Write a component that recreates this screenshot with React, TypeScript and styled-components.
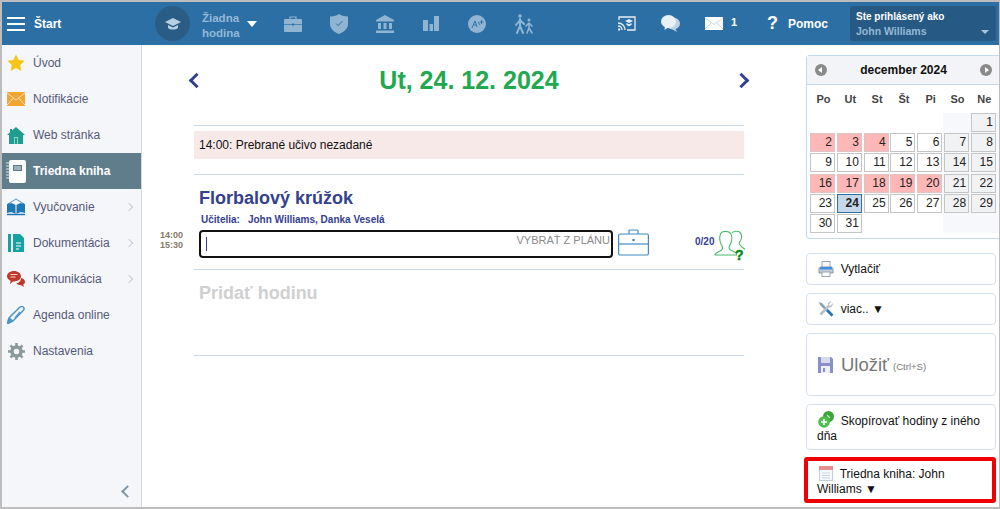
import styled, { createGlobalStyle } from 'styled-components'
import { ReactNode } from 'react'

const GlobalStyle = createGlobalStyle`
  html, body {
    margin: 0;
    height: 100%;
    background: #fff;
  }
  body {
    font-family: "Liberation Sans", Arial, sans-serif;
    overflow: hidden;
  }
  * {
    box-sizing: border-box;
  }
`

const Star = () => (
  <svg width="18" height="18" viewBox="0 0 18 18">
    <path d="M9 .5l2.6 5.6 6.1.7-4.5 4.2 1.2 6.1L9 14l-5.4 3.1 1.2-6.1L.3 6.8l6.1-.7z" fill="#f5c518" />
  </svg>
)

const Envelope = () => (
  <svg width="18" height="14" viewBox="0 0 18 14">
    <rect width="18" height="14" fill="#f2a533" />
    <path d="M0 1l9 7 9-7M0 13l6.5-7M18 13l-6.5-7" stroke="#fbe3bd" strokeWidth="1" fill="none" />
  </svg>
)

const House = () => (
  <svg width="18" height="17" viewBox="0 0 18 17">
    <path d="M9 0l9 8h-2v9H2V8H0l3-2.7V2h2v1.500z" fill="#1f9e8f" />
    <rect x="7" y="10" width="4" height="7" fill="#8fd3ca" />
    <rect x="8" y="11" width="2" height="6" fill="#1f9e8f" />
  </svg>
)

const Notebook = () => (
  <svg width="20" height="23" viewBox="0 0 20 23">
    <rect x="3" y="0" width="17" height="23" rx="2" fill="#fff" />
    <rect x="7" y="5" width="9" height="6" fill="#5f7b8a" />
    <path d="M8 7h7M8 9h7" stroke="#fff" strokeWidth=".8" />
    <path d="M0 3h5M0 6h5M0 9h5M0 12h5M0 15h5M0 18h5" stroke="#dfe6ea" strokeWidth="1.2" />
  </svg>
)

const Book = () => (
  <svg width="18" height="18" viewBox="0 0 18 18">
    <path d="M1 6l8-5 8 5" stroke="#4f94c9" strokeWidth="1" fill="none" />
    <path d="M0 6c3-1 6-1 8.500 1v9C6 14 3 14 0 15zM18 6c-3-1-6-1-8.500 1v9c2.500-2 5.500-2 8.500-1z" fill="#1f77b4" />
    <path d="M0 16.500h18" stroke="#1f77b4" strokeWidth="1.500" />
  </svg>
)

const Doc = () => (
  <svg width="16" height="18" viewBox="0 0 16 18">
    <rect width="3" height="18" fill="#17a2a2" />
    <path d="M5 0h7l4 4v14H5z" fill="#17a2a2" />
    <path d="M8 9h5M8 12h5M8 15h3" stroke="#fff" strokeWidth="1.200" />
  </svg>
)

const Chats = () => (
  <svg width="18" height="17" viewBox="0 0 18 17">
    <path d="M7 0c4 0 7 2.300 7 5.200s-3 5.200-7 5.200l-1 0-3 2.600.6-3.300C1.500 8.800 0 7.100 0 5.200 0 2.300 3 0 7 0z" fill="#c0392b" />
    <path d="M3.500 3.500h7M3.500 6h5" stroke="#f6d5d0" strokeWidth="1" />
    <path d="M14 7c2.500.5 4 2 4 3.700 0 1.200-.6 2.200-1.700 2.900l.4 2.400-2.700-1.800c-2 0-3.800-.7-4.700-1.900 2.500-.3 5-2.400 4.700-5.300z" fill="#c0392b" />
  </svg>
)

const Pen = () => (
  <svg width="18" height="18" viewBox="0 0 18 18">
    <path d="M0 18l2-6L12.500 1.500c1.500-1.500 4-1 4.500.5.300 1-.2 2-1 2.800L6 15z" fill="none" stroke="#4f94c9" strokeWidth="1.500" />
    <path d="M2 12l4 3M8 12l5-6" stroke="#4f94c9" strokeWidth="1.500" />
    <path d="M0 18l2-6 4 3z" fill="#4f94c9" />
  </svg>
)

const Gear = () => (
  <svg width="17" height="17" viewBox="0 0 17 17">
    <circle cx="8.500" cy="8.500" r="4.500" fill="none" stroke="#8a9a9a" strokeWidth="3.500" />
    <path d="M8.500 0v17M0 8.500h17M2.500 2.500l12 12M14.500 2.500l-12 12" stroke="#8a9a9a" strokeWidth="2.600" strokeDasharray="3 11 3" />
  </svg>
)

const Cap = () => (
  <svg width="16" height="14" viewBox="0 0 16 14">
    <path d="M8 1L0 5l8 4 8-4z" fill="#b9cfe0" />
    <path d="M3 8v3c2.500 2 7.500 2 10 0V8l-5 2.500z" fill="#b9cfe0" />
  </svg>
)

const Briefcase = () => (
  <svg width="18" height="16" viewBox="0 0 18 16">
    <path d="M6 3V1h6v2" fill="none" stroke="#8fb5d3" strokeWidth="1.200" />
    <rect y="3" width="18" height="13" rx="1" fill="#8fb5d3" />
    <path d="M0 8.500h18" stroke="#2c6fa5" strokeWidth=".7" />
    <rect x="8" y="7.500" width="2" height="2" fill="#2c6fa5" />
  </svg>
)

const Shield = () => (
  <svg width="18" height="20" viewBox="0 0 18 20">
    <path d="M9 0c2 1.500 5 2.300 9 2.500V10c0 4.500-4 8-9 10-5-2-9-5.500-9-10V2.500C4 2.300 7 1.500 9 0z" fill="#8fb5d3" />
    <path d="M6 9.500l2.200 2.200L12.500 7" stroke="#2c6fa5" strokeWidth="1" fill="none" />
  </svg>
)

const Bank = () => (
  <svg width="18" height="18" viewBox="0 0 18 18">
    <path d="M9 0l9 5v1.500H0V5z" fill="#8fb5d3" />
    <path d="M2 8h3v6H2zM7.500 8h3v6h-3zM13 8h3v6h-3zM0 15.500h18V18H0z" fill="#8fb5d3" />
  </svg>
)

const Bars = () => (
  <svg width="16" height="15" viewBox="0 0 16 15">
    <path d="M0 4h5v11H0zM6.500 8h3.500v7H6.500zM11 0h5v15h-5z" fill="#8fb5d3" />
  </svg>
)

const Grade = () => (
  <svg width="18" height="18" viewBox="0 0 18 18">
    <circle cx="9" cy="9" r="9" fill="#8fb5d3" />
    <path d="M4 13l3-7 2 6M5.500 10h3M10 7l2 3M13.500 5v4M11.500 7h4" stroke="#2c6fa5" strokeWidth=".9" fill="none" />
  </svg>
)

const Walkers = () => (
  <svg width="21" height="20" viewBox="0 0 21 20">
    <g fill="none" stroke="#8fb5d3" strokeLinecap="round">
      <circle cx="7" cy="2" r="1.800" fill="#8fb5d3" stroke="none" />
      <path d="M7 5v7l-3 7M7 12l3 7M7 6l-4 5M7 6l4 4" strokeWidth="2" />
      <circle cx="16" cy="6" r="1.500" fill="#8fb5d3" stroke="none" />
      <path d="M16 9v5l-2 5M16 14l3 5M16 9l-3 3M16 9l3 3" strokeWidth="1.600" />
    </g>
  </svg>
)

const Cast = () => (
  <svg width="18" height="15" viewBox="0 0 18 15">
    <path d="M1 4V1h16v13H9" fill="none" stroke="#e6eef5" strokeWidth="1.300" />
    <path d="M0 7c4 0 7 3 7 7M0 10c2.500 0 4 2 4 4" fill="none" stroke="#e6eef5" strokeWidth="1.300" />
    <circle cx="1" cy="13.500" r="1.200" fill="#e6eef5" />
    <path d="M11 3l4 2-4 2-4-2zM8.500 7l2.500 1.300L13.500 7v2l-2.500 1.300L8.500 9z" fill="#e6eef5" />
  </svg>
)

const Bubbles = () => (
  <svg width="19" height="18" viewBox="0 0 19 18">
    <ellipse cx="12" cy="8.500" rx="7" ry="6" fill="#bcd3e5" />
    <path d="M14 13l2 4-5-3z" fill="#bcd3e5" />
    <ellipse cx="7.500" cy="6.500" rx="7.500" ry="6.500" fill="#e9f1f7" />
    <path d="M4 11l-.5 4 4.500-3z" fill="#e9f1f7" />
  </svg>
)

const Mail = () => (
  <svg width="18" height="13" viewBox="0 0 18 13">
    <rect width="18" height="13" fill="#fff" />
    <path d="M0 1l9 6.500L18 1M0 12l6-6M18 12l-6-6" stroke="#b7cfe2" strokeWidth=".8" fill="none" />
  </svg>
)

const PlanCase = () => (
  <svg width="31" height="27" viewBox="0 0 31 27">
    <g fill="none" stroke="#3f8dc4" strokeWidth="1.200">
      <path d="M11 5V2a1 1 0 0 1 1-1h7a1 1 0 0 1 1 1v3" />
      <rect x=".6" y="5" width="29.800" height="21" rx="1.500" />
      <path d="M.6 15h29.800" />
    </g>
    <rect x="14.500" y="10" width="2" height="2" fill="#2c6fa5" />
  </svg>
)

const Pupils = () => (
  <svg width="32" height="32" viewBox="0 0 32 32">
    <g fill="none" stroke="#4cba70" strokeWidth="1.100">
      <path d="M18 3c1-2 6-2.500 8-.5 2.500 2.500 2 6-.5 10-.5 2 .5 3 2.500 4.500l3 2.500" />
      <path d="M1 25c0-2 2-2.500 5-4 3-1.500 3-3 2-5-3-5-3-8-1.500-12C8 .5 15 .5 17 4c1.500 3 1 7.500-1.500 12-1 2 0 3.500 2 4.500l5 2.500v2z" />
    </g>
    <text x="21" y="30" fontFamily="Liberation Sans" fontWeight="bold" fontSize="14" fill="#0a8a1f" stroke="#0a8a1f" strokeWidth=".5">?</text>
  </svg>
)

const Printer = () => (
  <svg width="16" height="16" viewBox="0 0 16 16">
    <rect x="4" y="0.500" width="8" height="7" fill="#f5f7fa" stroke="#9aa5b1" />
    <path d="M1 8c0-1 1-2 2-2h10c1 0 2 1 2 2v4H1z" fill="#c3ccd6" stroke="#8a96a3" />
    <rect x="2" y="6" width="12" height="2.500" fill="#3f8fe0" />
    <rect x="4" y="11" width="8" height="4.500" fill="#fff" stroke="#9aa5b1" />
  </svg>
)

const Tools = () => (
  <svg width="16" height="16" viewBox="0 0 16 16">
    <path d="M1 1l3 1 11 12-1.500 1.500L2 4z" fill="#8fa0ad" />
    <path d="M9 9l5.500 5.500" stroke="#1f77c4" strokeWidth="2.500" />
    <path d="M15 2l-3 3-1.500-1.500 3-3c-2-.5-4 1-3.500 3.500L1.500 12.500l2 2L11 6.500c2 .5 4-1.500 4-4.500z" fill="#b4bfc8" />
  </svg>
)

const Floppy = () => (
  <svg width="15" height="16" viewBox="0 0 15 16">
    <path d="M0 0h13l2 2v14H0z" fill="#8b8fc7" />
    <rect x="3" y="0" width="9" height="6" fill="#d8daf0" />
    <rect x="3" y="9" width="9" height="7" fill="#eef0f8" />
    <rect x="5" y="11" width="2" height="4" fill="#8b8fc7" />
  </svg>
)

const CopyDots = () => (
  <svg width="16" height="17" viewBox="0 0 16 17">
    <circle cx="10.500" cy="5.500" r="5.500" fill="#3da33d" />
    <circle cx="6" cy="11" r="5.800" fill="#4cc04c" />
    <path d="M3 11h6M6 8v6" stroke="#fff" strokeWidth="1.600" />
    <path d="M9 4l3 3" stroke="#c9eec9" strokeWidth="1.200" />
  </svg>
)

const CalendarGlyph = () => (
  <svg width="14" height="15" viewBox="0 0 14 15">
    <rect x=".5" y=".5" width="13" height="14" fill="#f6f9fc" stroke="#c4ced8" />
    <rect width="14" height="4" fill="#e88d8d" />
    <path d="M3 7h8M3 9.500h8M3 12h8" stroke="#c9d5e0" />
  </svg>
)

type MenuEntry = { label: string; icon: ReactNode; active?: boolean; more?: boolean }

const menu: MenuEntry[] = [
  { label: 'Úvod', icon: <Star /> },
  { label: 'Notifikácie', icon: <Envelope /> },
  { label: 'Web stránka', icon: <House /> },
  { label: 'Triedna kniha', icon: <Notebook />, active: true },
  { label: 'Vyučovanie', icon: <Book />, more: true },
  { label: 'Dokumentácia', icon: <Doc />, more: true },
  { label: 'Komunikácia', icon: <Chats />, more: true },
  { label: 'Agenda online', icon: <Pen /> },
  { label: 'Nastavenia', icon: <Gear /> },
]

type Tone = 'plain' | 'weekend' | 'pink' | 'today'

const weekDays = ['Po', 'Ut', 'St', 'Št', 'Pi', 'So', 'Ne']
const pinkDays = [2, 3, 4, 16, 17, 18, 19, 20]

const toneOf = (day: number): Tone => {
  if (day === 24) return 'today'
  if (pinkDays.includes(day)) return 'pink'
  return (day + 5) % 7 >= 5 ? 'weekend' : 'plain'
}

const App = () => {
  const days = Array.from({ length: 31 }, (_, i) => i + 1)

  return (
    <Frame>
      <GlobalStyle />
      <Header>
        <Burger><span /><span /><span /></Burger>
        <StartLabel>Štart</StartLabel>
        <CapCircle><Cap /></CapCircle>
        <LessonLabel>Žiadna<br />hodina</LessonLabel>
        <WhiteCaret />
        <IconRow>
          <IconSlot><Briefcase /></IconSlot>
          <IconSlot><Shield /></IconSlot>
          <IconSlot><Bank /></IconSlot>
          <IconSlot><Bars /></IconSlot>
          <IconSlot><Grade /></IconSlot>
          <IconSlot><Walkers /></IconSlot>
        </IconRow>
        <RightTools>
          <ToolSlot $width={44}><Cast /></ToolSlot>
          <ToolSlot $width={43}><Bubbles /></ToolSlot>
          <ToolSlot $width={44}><Mail /><MailCount>1</MailCount></ToolSlot>
          <HelpMark>?</HelpMark>
          <HelpLabel>Pomoc</HelpLabel>
        </RightTools>
        <LoginBox>
          <LoginTitle>Ste prihlásený ako</LoginTitle>
          <LoginName>John Williams</LoginName>
          <LoginCaret />
        </LoginBox>
      </Header>
      <Body>
        <Sidebar>
          {menu.map(item => (
            <MenuItem key={item.label} $active={item.active}>
              <MenuIcon>{item.icon}</MenuIcon>
              <MenuLabel $active={item.active}>{item.label}</MenuLabel>
              {item.more && <MoreArrow />}
            </MenuItem>
          ))}
          <Collapse><CollapseArrow /></Collapse>
        </Sidebar>
        <Main>
          <DateRow>
            <DateArrow $dir="left" />
            <DateTitle>Ut, 24. 12. 2024</DateTitle>
            <DateArrow $dir="right" />
          </DateRow>
          <Rule />
          <Alert>14:00: Prebrané učivo nezadané</Alert>
          <Rule $top={15} />
          <LessonTitle>Florbalový krúžok</LessonTitle>
          <Teachers><b>Učitelia:</b><b>John Williams, Danka Veselá</b></Teachers>
          <LessonRow>
            <Times>14:00<br />15:30</Times>
            <TopicBox>
              <Cursor />
              <PlanLink>VYBRAŤ Z PLÁNU</PlanLink>
            </TopicBox>
            <CaseWrap><PlanCase /></CaseWrap>
            <Count>0/20</Count>
            <PupilsWrap><Pupils /></PupilsWrap>
          </LessonRow>
          <Rule $top={9} />
          <AddLesson>Pridať hodinu</AddLesson>
          <Rule $top={52} />
        </Main>
        <Aside>
          <Calendar>
            <CalendarHead>
              <RoundArrow $dir="left" />
              <CalendarTitle>december 2024</CalendarTitle>
              <RoundArrow $dir="right" />
            </CalendarHead>
            <WeekRow>
              {weekDays.map(d => <WeekDay key={d}>{d}</WeekDay>)}
            </WeekRow>
            <DaysGrid>
              <DayFiller />
              {days.map(d => <Day key={d} $tone={toneOf(d)}>{d}</Day>)}
            </DaysGrid>
          </Calendar>
          <ActionButton $height={32} $top={14}><Printer />&nbsp;&nbsp;Vytlačiť</ActionButton>
          <ActionButton $height={32}><Tools />&nbsp;&nbsp;viac.. ▼</ActionButton>
          <ActionButton $height={63}>
            <Floppy /><SaveLabel>Uložiť</SaveLabel><SaveHint>(Ctrl+S)</SaveHint>
          </ActionButton>
          <WrapButton><CopyDots />&nbsp;&nbsp;Skopírovať hodiny z iného dňa</WrapButton>
          <RedButton><CalendarGlyph />&nbsp;&nbsp;Triedna kniha: John Williams ▼</RedButton>
        </Aside>
      </Body>
    </Frame>
  )
}

const Frame = styled.div`
  width: 1000px;
  height: 509px;
  border: 2px solid #bdbdbd;
  border-right-width: 1px;
  display: flex;
  flex-direction: column;
  overflow: hidden;
  background: #fff;
`

const Header = styled.header`
  height: 43px;
  flex: none;
  background: #2c6fa5;
  display: flex;
  align-items: center;
  color: #fff;
  position: relative;
`

const Burger = styled.div`
  width: 18px;
  margin-left: 5px;
  display: flex;
  flex-direction: column;
  gap: 4px;

  span {
    display: block;
    height: 2px;
    background: #fff;
  }
`

const StartLabel = styled.div`
  margin-left: 9px;
  width: 121px;
  font-size: 12px;
  font-weight: bold;
`

const CapCircle = styled.div`
  width: 35px;
  height: 35px;
  border-radius: 50%;
  background: #2a5d85;
  display: flex;
  align-items: center;
  justify-content: center;
`

const LessonLabel = styled.div`
  margin: 4px 0 0 12px;
  width: 45px;
  font-size: 11.5px;
  font-weight: bold;
  line-height: 15px;
  color: #94b8d6;
`

const WhiteCaret = styled.div`
  width: 0;
  height: 0;
  border-left: 5px solid transparent;
  border-right: 5px solid transparent;
  border-top: 6px solid #fff;
`

const IconRow = styled.div`
  display: flex;
  margin-left: 13px;
`

const IconSlot = styled.div`
  width: 46px;
  height: 26px;
  display: flex;
  align-items: center;
  justify-content: center;
`

const RightTools = styled.div`
  display: flex;
  align-items: center;
  margin-left: 59px;
`

const ToolSlot = styled.div<{ $width: number }>`
  width: ${props => props.$width}px;
  display: flex;
  align-items: center;
  justify-content: center;
  position: relative;
`

const MailCount = styled.span`
  position: absolute;
  left: 39px;
  top: -1px;
  font-size: 11px;
  font-weight: bold;
`

const HelpMark = styled.div`
  margin-left: 31px;
  font-size: 18px;
  font-weight: bold;
  width: 21px;
`

const HelpLabel = styled.div`
  font-size: 12px;
  font-weight: bold;
`

const LoginBox = styled.div`
  width: 146px;
  height: 35px;
  margin: 0 3px 0 auto;
  background: #265a85;
  border-radius: 3px;
  padding: 5px 6px;
  position: relative;
  flex: none;
`

const LoginTitle = styled.div`
  font-size: 10px;
  font-weight: bold;
  line-height: 12px;
`

const LoginName = styled.div`
  font-size: 10.5px;
  font-weight: bold;
  line-height: 16px;
  color: #94b8d6;
`

const LoginCaret = styled.div`
  position: absolute;
  right: 7px;
  bottom: 7px;
  border-left: 4px solid transparent;
  border-right: 4px solid transparent;
  border-top: 4px solid #a9c3d9;
`

const Body = styled.div`
  flex: 1;
  display: flex;
  min-height: 0;
`

const Sidebar = styled.nav`
  width: 140px;
  flex: none;
  background: #f5f6f9;
  border-right: 1px solid #d5d7da;
  display: flex;
  flex-direction: column;
`

const MenuItem = styled.div<{ $active?: boolean }>`
  height: 36px;
  flex: none;
  display: flex;
  align-items: center;
  position: relative;
  background: ${props => (props.$active ? '#607d8b' : 'transparent')};
`

const MenuIcon = styled.div`
  width: 20px;
  margin: 0 7px 0 4px;
  display: flex;
  align-items: center;
  justify-content: center;
`

const MenuLabel = styled.span<{ $active?: boolean }>`
  font-size: 12px;
  font-weight: ${props => (props.$active ? 'bold' : 'normal')};
  color: ${props => (props.$active ? '#fff' : '#55597a')};
`

const MoreArrow = styled.i`
  position: absolute;
  left: 124px;
  top: 15px;
  width: 6px;
  height: 6px;
  border-top: 1px solid #c6c9cd;
  border-right: 1px solid #c6c9cd;
  transform: rotate(45deg);
`

const Collapse = styled.div`
  margin-top: auto;
  height: 32px;
  display: flex;
  align-items: center;
  justify-content: flex-end;
  padding-right: 9px;
`

const CollapseArrow = styled.i`
  width: 9px;
  height: 9px;
  border-left: 2px solid #7f97a8;
  border-bottom: 2px solid #7f97a8;
  transform: rotate(45deg);
`

const Main = styled.main`
  width: 664px;
  flex: none;
  padding: 0 62px 0 52px;
`

const DateRow = styled.div`
  height: 80px;
  padding-bottom: 10px;
  display: flex;
  align-items: center;
  justify-content: space-between;
`

const DateTitle = styled.h1`
  margin: 0;
  font-size: 25px;
  font-weight: bold;
  color: #22a84e;
`

const DateArrow = styled.i<{ $dir: 'left' | 'right' }>`
  width: 11px;
  height: 11px;
  margin: ${props => (props.$dir === 'left' ? '0 0 0 -3px' : '0 -3px 0 0')};
  border-top: 3px solid #33418f;
  border-${props => props.$dir}: 3px solid #33418f;
  transform: rotate(${props => (props.$dir === 'left' ? '-45deg' : '45deg')});
`

const Rule = styled.hr<{ $top?: number }>`
  margin: ${props => props.$top ?? 0}px 0 0;
  border: 0;
  height: 1px;
  background: #cbd9e6;
`

const Alert = styled.div`
  margin-top: 5px;
  height: 28px;
  background: #f8e9e9;
  padding-left: 5px;
  display: flex;
  align-items: center;
  font-size: 12px;
  color: #111;
`

const LessonTitle = styled.h2`
  margin: 13px 0 0 5px;
  font-size: 18px;
  line-height: 20px;
  font-weight: bold;
  color: #33418f;
`

const Teachers = styled.div`
  margin: 6px 0 0 7px;
  font-size: 10px;
  line-height: 11px;
  color: #33418f;
  display: flex;
  gap: 8px;
`

const LessonRow = styled.div`
  margin-top: 5px;
  padding-left: 5px;
  display: flex;
  align-items: flex-start;
  position: relative;
`

const Times = styled.div`
  position: absolute;
  left: -34px;
  top: 0;
  font-size: 9px;
  line-height: 10px;
  color: #857a68;
  font-weight: bold;
`

const TopicBox = styled.div`
  width: 414px;
  height: 28px;
  flex: none;
  border: 2px solid #111;
  border-radius: 4px;
  position: relative;
  display: flex;
  justify-content: space-between;
  padding: 0 1px 0 5px;
`

const Cursor = styled.i`
  width: 1px;
  height: 14px;
  margin-top: 5px;
  background: #33418f;
`

const PlanLink = styled.span`
  font-size: 11px;
  line-height: 14px;
  margin-top: 1px;
  color: #8a8a8a;
`

const CaseWrap = styled.div`
  margin: -1px 0 0 5px;
  width: 77px;
  flex: none;
`

const Count = styled.div`
  margin-top: 6px;
  width: 19px;
  flex: none;
  font-size: 10px;
  font-weight: bold;
  line-height: 12px;
  color: #33418f;
`

const PupilsWrap = styled.div`
  height: 29px;
  flex: none;
`

const AddLesson = styled.div`
  margin: 13px 0 0 5px;
  font-size: 18px;
  line-height: 20px;
  font-weight: bold;
  color: #d0d0d0;
`

const Aside = styled.aside`
  width: 193px;
  flex: none;
  padding-top: 10px;
  display: flex;
  flex-direction: column;
`

const Calendar = styled.div`
  height: 184px;
  border: 1px solid #c5d9ec;
  border-right: 0;
  border-radius: 4px 0 0 4px;
  display: flex;
  flex-direction: column;
`

const CalendarHead = styled.div`
  height: 29px;
  flex: none;
  background: #f2f4f7;
  border-bottom: 1px solid #c5d9ec;
  display: flex;
  align-items: center;
  justify-content: space-between;
  padding: 0 7px 0 8px;
`

const CalendarTitle = styled.div`
  font-size: 12px;
  font-weight: bold;
  color: #111;
`

const RoundArrow = styled.div<{ $dir: 'left' | 'right' }>`
  width: 12px;
  height: 12px;
  border-radius: 50%;
  background: #8a8a8a;
  position: relative;

  &::after {
    content: '';
    position: absolute;
    top: 3px;
    left: ${props => (props.$dir === 'left' ? '3px' : '5px')};
    border-top: 3px solid transparent;
    border-bottom: 3px solid transparent;
    border-${props => (props.$dir === 'left' ? 'right' : 'left')}: 4px solid #fff;
  }
`

const WeekRow = styled.div`
  display: grid;
  grid-template-columns: repeat(7, 26.83px);
  padding-left: 3px;
  height: 28px;
  align-items: center;
`

const WeekDay = styled.div`
  text-align: center;
  font-size: 11px;
  font-weight: bold;
  color: #444;
`

const DaysGrid = styled.div`
  display: grid;
  grid-template-columns: repeat(7, 25px);
  grid-auto-rows: 19px;
  column-gap: 1.83px;
  row-gap: 1.200px;
  padding-left: 3px;
  background: linear-gradient(to right, transparent 136px, #f6f8fb 136px);
`

const DayFiller = styled.div`
  grid-column: 1 / span 6;
`

const dayBackground = { plain: '#fff', weekend: '#f1f2f4', pink: '#ffb8b8', today: '#c5d7e8' }

const Day = styled.div<{ $tone: Tone }>`
  border: 1px solid ${props => (props.$tone === 'today' ? '#2c6fa5' : props.$tone === 'pink' ? '#dcc4c4' : '#c5c5c5')};
  background: ${props => dayBackground[props.$tone]};
  font-size: 12px;
  font-weight: ${props => (props.$tone === 'today' ? 'bold' : 'normal')};
  color: #222;
  text-align: right;
  line-height: 17px;
  padding-right: 2px;
`

const ActionButton = styled.div<{ $height: number; $top?: number }>`
  width: 190px;
  height: ${props => props.$height}px;
  flex: none;
  margin-top: ${props => props.$top ?? 8}px;
  border: 1px solid #d3e0ec;
  border-radius: 4px;
  display: flex;
  align-items: center;
  padding-left: 11px;
  font-size: 12px;
  color: #111;
`

const SaveLabel = styled.span`
  margin-left: 8px;
  font-size: 18.500px;
  color: #777;
`

const SaveHint = styled.span`
  margin: 4px 0 0 4px;
  font-size: 9.5px;
  color: #777;
`

const WrapButton = styled.div`
  width: 190px;
  height: 46px;
  flex: none;
  margin-top: 8px;
  border: 1px solid #d3e0ec;
  border-radius: 4px;
  padding: 6px 10px 0;
  font-size: 12px;
  line-height: 15px;
  color: #111;

  svg {
    margin: 0 0 -3px 1px;
  }
`

const RedButton = styled.div`
  width: 192px;
  height: 46px;
  flex: none;
  margin: 7px 0 0 -2px;
  border: 4px solid #f00000;
  border-radius: 3px;
  padding: 5px 9px 0;
  font-size: 12px;
  line-height: 15px;
  color: #111;

  svg {
    margin: 0 0 -3px 2px;
  }
`

export default App
